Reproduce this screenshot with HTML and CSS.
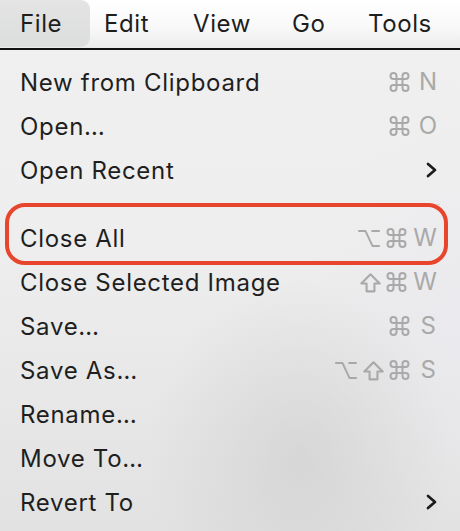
FILE: index.html
```html
<!DOCTYPE html>
<html>
<head>
<meta charset="utf-8">
<link rel="stylesheet" href="styles.css">
</head>
<body>
<div class="screen">
  <div class="menubar">
    <div class="mb-item mb-file active">File</div>
    <div class="mb-item mb-edit">Edit</div>
    <div class="mb-item mb-view">View</div>
    <div class="mb-item mb-go">Go</div>
    <div class="mb-item mb-tools">Tools</div>
  </div>
  <div class="menu">
    <div class="row"><span class="label">New from Clipboard</span><span class="keys">
      <svg class="sym cmd" width="21" height="20" viewBox="2 2 20 20"><path d="M15 6v12a3 3 0 1 0 3-3H6a3 3 0 1 0 3 3V6a3 3 0 1 0-3 3h12a3 3 0 1 0-3-3"/></svg><span class="key">N</span></span></div>
    <div class="row"><span class="label">Open…</span><span class="keys">
      <svg class="sym cmd" width="21" height="20" viewBox="2 2 20 20"><path d="M15 6v12a3 3 0 1 0 3-3H6a3 3 0 1 0 3 3V6a3 3 0 1 0-3 3h12a3 3 0 1 0-3-3"/></svg><span class="key">O</span></span></div>
    <div class="row"><span class="label">Open Recent</span><span class="keys"><svg class="chev" width="13" height="16" viewBox="0 0 13 16"><path d="M3 2 L10 8 L3 14"/></svg></span></div>
    <div class="sep"></div>
    <div class="row highlighted"><span class="label">Close All</span><span class="keys">
      <svg class="sym opt" width="24" height="19" viewBox="2 2 20 20" preserveAspectRatio="none"><path vector-effect="non-scaling-stroke" d="M3 4h6l6 16h6M14 4h7"/></svg>
      <svg class="sym cmd" width="21" height="20" viewBox="2 2 20 20"><path d="M15 6v12a3 3 0 1 0 3-3H6a3 3 0 1 0 3 3V6a3 3 0 1 0-3 3h12a3 3 0 1 0-3-3"/></svg><span class="key keyW">W</span></span></div>
    <div class="row"><span class="label">Close Selected Image</span><span class="keys">
      <svg class="sym shift" width="21" height="21" viewBox="4 4 16 15.5"><path d="M9 18.5v-6H5l7-7 7 7h-4v6H9z"/></svg>
      <svg class="sym cmd" width="21" height="20" viewBox="2 2 20 20"><path d="M15 6v12a3 3 0 1 0 3-3H6a3 3 0 1 0 3 3V6a3 3 0 1 0-3 3h12a3 3 0 1 0-3-3"/></svg><span class="key keyW">W</span></span></div>
    <div class="row"><span class="label">Save…</span><span class="keys">
      <svg class="sym cmd" width="21" height="20" viewBox="2 2 20 20"><path d="M15 6v12a3 3 0 1 0 3-3H6a3 3 0 1 0 3 3V6a3 3 0 1 0-3 3h12a3 3 0 1 0-3-3"/></svg><span class="key keyS">S</span></span></div>
    <div class="row"><span class="label">Save As…</span><span class="keys">
      <svg class="sym opt" width="24" height="19" viewBox="2 2 20 20" preserveAspectRatio="none"><path vector-effect="non-scaling-stroke" d="M3 4h6l6 16h6M14 4h7"/></svg>
      <svg class="sym shift" width="21" height="21" viewBox="4 4 16 15.5"><path d="M9 18.5v-6H5l7-7 7 7h-4v6H9z"/></svg>
      <svg class="sym cmd" width="21" height="20" viewBox="2 2 20 20"><path d="M15 6v12a3 3 0 1 0 3-3H6a3 3 0 1 0 3 3V6a3 3 0 1 0-3 3h12a3 3 0 1 0-3-3"/></svg><span class="key keyS">S</span></span></div>
    <div class="row"><span class="label">Rename…</span></div>
    <div class="row"><span class="label">Move To…</span></div>
    <div class="row"><span class="label">Revert To</span><span class="keys"><svg class="chev" width="13" height="16" viewBox="0 0 13 16"><path d="M3 2 L10 8 L3 14"/></svg></span></div>
  </div>
</div>
</body>
</html>
```

FILE: styles.css
```css
html, body {
  margin: 0;
  padding: 0;
}
body {
  width: 460px;
  height: 531px;
  overflow: hidden;
  font-family: Inter, "Liberation Sans", sans-serif;
  color: #222222;
}
.screen {
  width: 460px;
  height: 531px;
  background:
    radial-gradient(ellipse 220px 260px at 300px 460px, rgba(200,200,200,0.5), rgba(200,200,200,0) 70%),
    radial-gradient(ellipse 240px 300px at 470px 320px, rgba(234,234,240,0.7), rgba(234,234,240,0) 70%),
    linear-gradient(180deg, #f0f0f0 0%, #eeeeee 45%, #e2e2e2 100%);
}
.menubar {
  height: 48px;
  display: grid;
  grid-template-columns: 90px 89px 99px 76px 1fr;
  background: linear-gradient(180deg, #ffffff 0%, #f9f9f9 55%, #ececec 100%);
  border-bottom: 2px solid #111111;
  font-size: 24px;
  line-height: 48px;
  letter-spacing: 0.6px;
}
.mb-item {
  padding-left: 14px;
  color: #1e1e1e;
  height: 47px;
}
.mb-file {
  padding-left: 20px;
}
.mb-item.active {
  background: linear-gradient(180deg, #e3e4e3 0%, #dcdedd 100%);
  border-radius: 0 9px 9px 0;
}
.menu {
  padding-top: 10px;
}
.row {
  position: relative;
  height: 44px;
  display: flex;
  align-items: center;
  justify-content: space-between;
  padding: 0 23px 0 20px;
  font-size: 24px;
}
.label {
  color: #1f1f1f;
  letter-spacing: 0.7px;
}
.keys {
  display: flex;
  align-items: center;
  gap: 5px;
  color: #a9a9a9;
}
.sym {
  display: block;
  fill: none;
  stroke: #a9a9a9;
  stroke-width: 2;
  stroke-linecap: round;
  stroke-linejoin: round;
}
.sym.opt path {
  stroke-width: 2;
  stroke-linecap: butt;
}
.sym.shift {
  stroke-width: 1.6;
}
.key {
  font-size: 24px;
  line-height: 24px;
  margin-left: 4px;
}
.keyW {
  margin-left: 1px;
}
.keyS {
  margin-left: 6px;
  margin-right: 1px;
}
.chev {
  display: block;
  margin-right: -1px;
  fill: none;
  stroke: #1c1c1c;
  stroke-width: 2.7;
  stroke-linecap: round;
  stroke-linejoin: round;
}
.sep {
  height: 24px;
  display: flex;
  align-items: center;
  padding: 0 20px;
}
.sep::before {
  content: "";
  display: block;
  flex: 1;
  height: 1px;
  background: #d6d6d6;
}
.row.highlighted::after {
  content: "";
  position: absolute;
  top: -13px;
  bottom: -5px;
  left: 5px;
  right: 12px;
  border: 4px solid #e8462c;
  border-radius: 20px;
  pointer-events: none;
}
```
